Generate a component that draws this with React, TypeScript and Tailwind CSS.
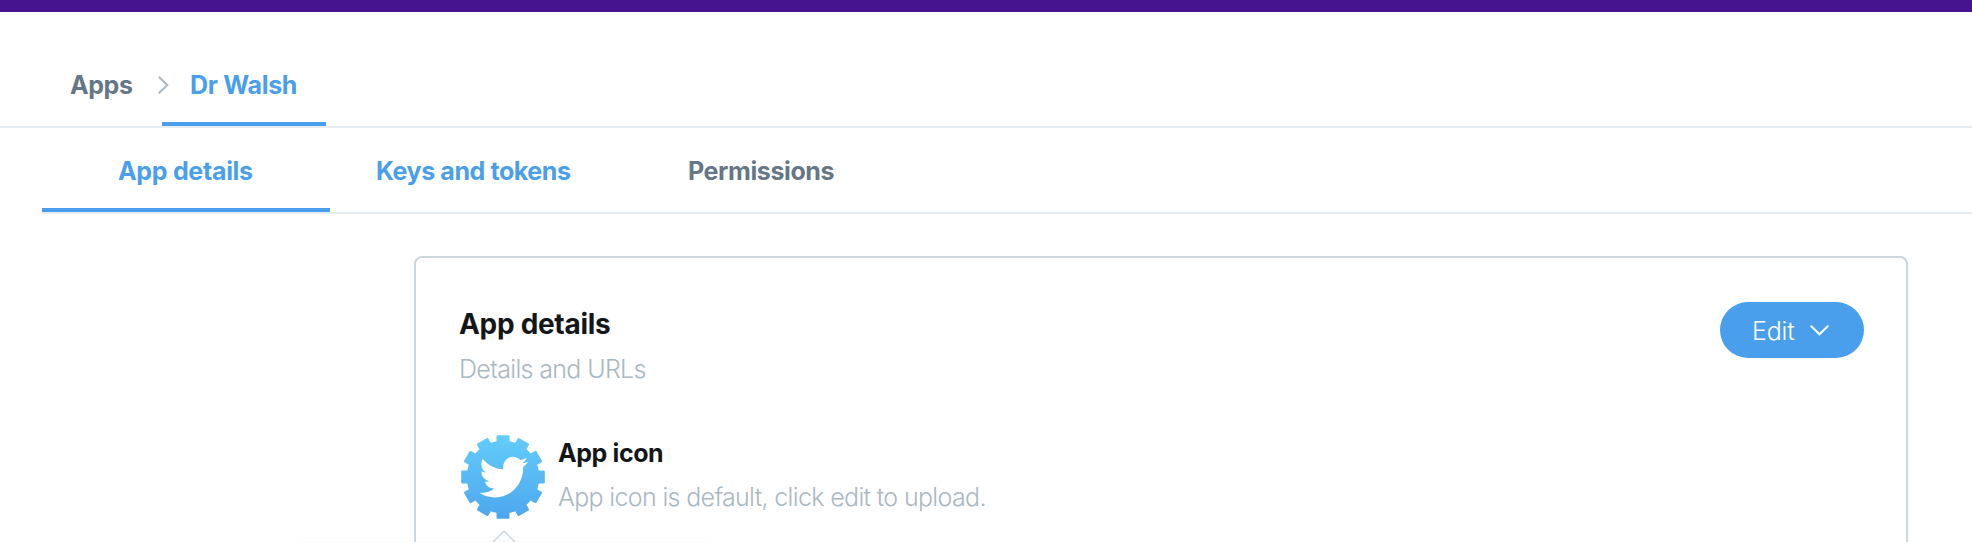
import React from "react";

const TEETH = [0, 30, 60, 90, 120, 150];

function GearBirdIcon() {
  return (
    <svg className="block h-[84px] w-[84px]" viewBox="0 0 84 84" aria-hidden="true">
      <defs>
        <linearGradient id="gear-fill" gradientUnits="userSpaceOnUse" x1="0" y1="0" x2="0" y2="84">
          <stop offset="0" stopColor="#63cdfa" />
          <stop offset="1" stopColor="#4da6ee" />
        </linearGradient>
        <clipPath id="gear-shape">
          <circle cx="42" cy="42" r="36.3" />
          {TEETH.map((angle) => (
            <rect
              key={angle}
              x="35.5"
              y="0.2"
              width="13"
              height="83.6"
              rx="1.2"
              transform={`rotate(${angle} 42 42)`}
            />
          ))}
        </clipPath>
      </defs>
      <rect width="84" height="84" fill="url(#gear-fill)" clipPath="url(#gear-shape)" />
      <path
        fill="#fff"
        transform="translate(18.4 17.2) scale(2.03 2.08)"
        d="M23.953 4.57a10 10 0 01-2.825.775 4.958 4.958 0 002.163-2.723c-.951.555-2.005.959-3.127 1.184a4.92 4.92 0 00-8.384 4.482C7.69 8.095 4.067 6.13 1.64 3.162a4.822 4.822 0 00-.666 2.475c0 1.71.87 3.213 2.188 4.096a4.904 4.904 0 01-2.228-.616v.06a4.923 4.923 0 003.946 4.827 4.996 4.996 0 01-2.212.085 4.936 4.936 0 004.604 3.417 9.867 9.867 0 01-6.102 2.105c-.39 0-.779-.023-1.17-.067a13.995 13.995 0 007.557 2.209c9.053 0 13.998-7.496 13.998-13.985 0-.21 0-.42-.015-.63A9.935 9.935 0 0024 4.59z"
      />
    </svg>
  );
}

export default function App() {
  return (
    <div className="relative flex h-[542px] flex-col overflow-hidden bg-white font-['Inter',sans-serif] text-[25px] leading-8 whitespace-nowrap">
      <div className="h-3 shrink-0 bg-[#47148f]" />

      <nav className="flex h-[116px] shrink-0 border-b-2 border-[#e6ecf0] pt-[57px] font-bold">
        <a className="ml-[70px] w-[88px] tracking-[-0.4px] text-[#657786]">Apps</a>
        <svg className="mt-[7px] block h-[18px] w-[11px]" viewBox="0 0 11 18" fill="none" stroke="#aab8c2" strokeWidth="2">
          <path d="M0.8 0.8L9.3 9L0.8 17.2" />
        </svg>
        <a className="-ml-[7px] w-[164px] border-b-4 border-[#4a9fec] pl-7 tracking-[-0.3px] text-[#4a9fec]">Dr Walsh</a>
      </nav>

      <nav className="ml-[42px] flex h-[86px] shrink-0 border-b-2 border-[#e6ecf0] pt-[27px] font-bold">
        <a className="w-[288px] border-b-4 border-[#4a9fec] pl-[76px] tracking-[-0.3px] text-[#4a9fec]">App details</a>
        <a className="w-[315px] pl-[46px] tracking-[-0.42px] text-[#4a9fec]">Keys and tokens</a>
        <a className="pl-[43px] tracking-[-0.4px] text-[#657786]">Permissions</a>
      </nav>

      <main className="mt-[42px] ml-[414px] h-[320px] w-[1494px] shrink-0 rounded-t-[8px] border-2 border-b-0 border-[#ccd6dd] px-[42px] pt-11">
        <header className="flex justify-between">
          <div className="pl-[1px] pt-[4px]">
            <h1 className="text-[28px] leading-9 font-bold tracking-[-0.3px] text-[#14171a]">App details</h1>
            <p className="mt-[11px] font-light tracking-[-0.65px] text-[#aab8c2]">Details and URLs</p>
          </div>
          <button className="flex h-14 w-36 items-center rounded-full bg-[#4a9fec] pl-[32px] text-white">
            <span className="w-[58px] pt-[2px] text-left font-light tracking-[-0.2px]">Edit</span>
            <svg className="block h-[11px] w-[19px]" viewBox="0 0 19 11" fill="none" stroke="#fff" strokeWidth="2" strokeLinecap="round">
              <path d="M1.3 1.3L9.5 9.3L17.7 1.3" />
            </svg>
          </button>
        </header>

        <section className="mt-[50px] flex pl-[3px]">
          <GearBirdIcon />
          <div className="pl-[13px] pt-[2px]">
            <h2 className="font-bold tracking-[-0.4px] text-[#14171a]">App icon</h2>
            <p className="mt-3 font-light tracking-[-0.66px] text-[#aab8c2]">App icon is default, click edit to upload.</p>
          </div>
        </section>
      </main>

      <svg className="absolute top-[530px] left-[492px] block h-3 w-6" viewBox="0 0 24 12" fill="#fff" stroke="#ccd6dd" strokeWidth="1.5">
        <path d="M0.5 12.5L12 1L23.5 12.5" />
      </svg>
      <div className="absolute top-[541px] left-[300px] h-px w-[410px] bg-black/[0.015]" />
    </div>
  );
}
